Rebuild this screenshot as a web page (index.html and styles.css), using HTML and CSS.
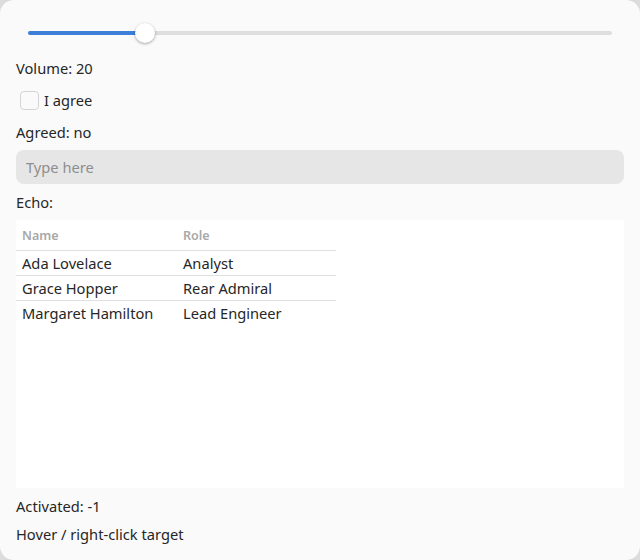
FILE: index.html
```html
<!DOCTYPE html>
<html lang="en">
<head>
    <meta charset="UTF-8">
    <title>Controls</title>
    <link rel="stylesheet" href="styles.css">
</head>
<body class="window">
    <div class="slider">
        <div class="track">
            <div class="fill" style="width: 20%"></div>
            <div class="thumb" style="left: 20%"></div>
        </div>
    </div>
    <div class="line">Volume: 20</div>
    <label class="check_row">
        <span class="check_box"></span>
        <span>I agree</span>
    </label>
    <div class="line">Agreed: no</div>
    <div class="field">Type here</div>
    <div class="line">Echo:</div>
    <div class="table_box">
        <table class="people">
            <tr class="head">
                <th class="first">Name</th>
                <th>Role</th>
            </tr>
            <tr>
                <td>Ada Lovelace</td>
                <td>Analyst</td>
            </tr>
            <tr>
                <td>Grace Hopper</td>
                <td>Rear Admiral</td>
            </tr>
            <tr>
                <td>Margaret Hamilton</td>
                <td>Lead Engineer</td>
            </tr>
        </table>
    </div>
    <div class="line">Activated: -1</div>
    <div class="line">Hover / right-click target</div>
</body>
</html>
```

FILE: styles.css
```css
html {
    background: #dcdcdc;
    height: 100%;
}
.window {
    margin: 0;
    height: 560px;
    box-sizing: border-box;
    padding: 16px;
    background: #fafafa;
    border-radius: 14px;
    display: flex;
    flex-direction: column;
    gap: 8px;
    font-family: "Noto Sans", "Open Sans", sans-serif;
    font-size: 14.67px;
    color: #262626;
}
.slider {
    height: 34px;
    padding: 0 12px;
    display: flex;
    align-items: center;
}
.track {
    position: relative;
    flex: 1;
    height: 4px;
    border-radius: 2px;
    background: #dedede;
}
.fill {
    height: 100%;
    border-radius: 2px;
    background: #3d7fd9;
}
.thumb {
    position: absolute;
    top: -8px;
    width: 20px;
    height: 20px;
    margin-left: -10px;
    border-radius: 50%;
    background: #ffffff;
    box-shadow: 0 1px 3px rgba(0, 0, 0, 0.35);
}
.line {
    line-height: 20px;
    height: 20px;
}
.check_row {
    height: 28px;
    display: flex;
    align-items: center;
    gap: 5px;
    padding-left: 4px;
}
.check_box {
    width: 17px;
    height: 17px;
    border: 1px solid #d4d4d4;
    border-radius: 4px;
    background: #fafafa;
}
.field {
    height: 34px;
    line-height: 34px;
    padding: 0 10px;
    border-radius: 8px;
    background: #e6e6e6;
    color: #8e8e8e;
}
.table_box {
    flex: 1;
    background: #ffffff;
}
.people {
    border-collapse: collapse;
    table-layout: fixed;
    width: 320px;
}
.people th {
    height: 30px;
    padding: 0 6px;
    text-align: left;
    font-size: 12.5px;
    font-weight: 600;
    color: #a8a8a8;
    border-bottom: 1px solid #e0e0e0;
}
.people th.first {
    width: 149px;
}
.people td {
    height: 24px;
    padding: 0 6px;
    white-space: nowrap;
    border-bottom: 1px solid #e0e0e0;
}
.people tr:last-child td {
    border-bottom: none;
}
```
